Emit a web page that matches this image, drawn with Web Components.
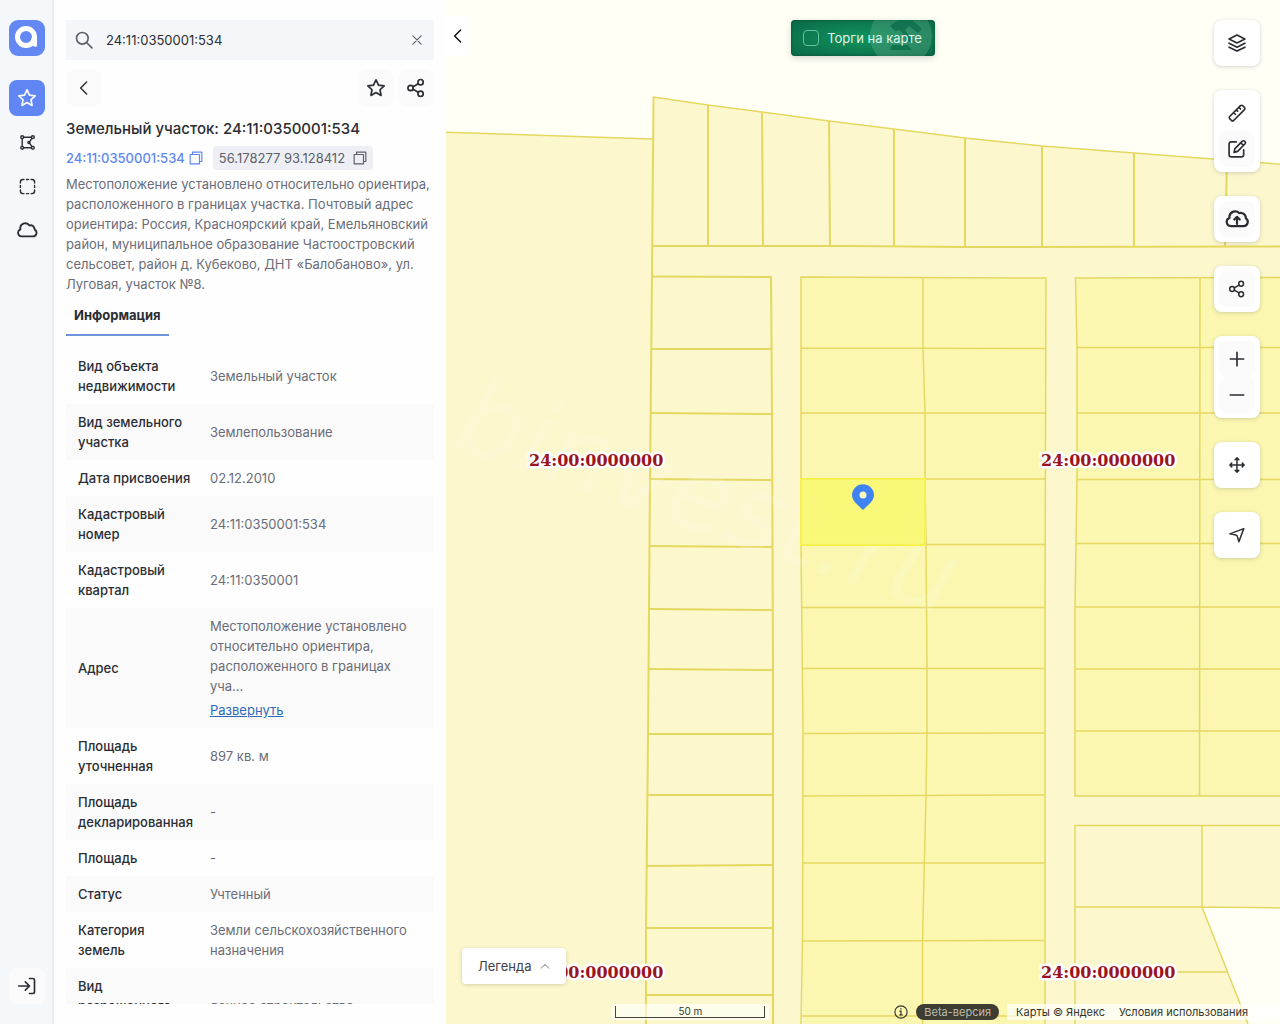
<!DOCTYPE html>
<html lang="ru">
<head>
<meta charset="utf-8">
<meta name="viewport" content="width=device-width, initial-scale=1">
<title>Земельный участок: 24:11:0350001:534</title>
<style>
:root {
  --font: Inter, "Open Sans", sans-serif;
  --ink: #2b2d33;
  --muted: #6a6d78;
  --accent: #5f86f2;
}
html, body { margin: 0; height: 100%; }
body { font: 13px/20px var(--font); color: var(--ink); overflow: hidden; }
</style>
</head>
<body>
<cad-app></cad-app>
<script>
const ICONS = {
  star: '<path d="M12 2.200l3 6.300 6.800.9-5 4.700 1.300 6.800-6.100-3.400-6.100 3.400 1.300-6.800-5-4.700 6.800-.9z"/>',
  polygon: '<circle cx="4.500" cy="4.500" r="2"/><circle cx="19.500" cy="4.500" r="2"/><circle cx="4.500" cy="19.500" r="2"/><circle cx="19.500" cy="19.500" r="2"/><circle cx="14" cy="12" r="1.500"/><path d="M4.500 6.500v11M6.500 4.500h11M6.500 19.500h11M18.300 6.200L15 10.800M15 13.200l3.300 4.600"/>',
  select: '<path d="M2 7V5.500Q2 2 5.500 2H7M17 2h1.500Q22 2 22 5.500V7M22 17v1.500Q22 22 18.500 22H17M7 22H5.500Q2 22 2 18.500V17M10.500 2h3M10.500 22h3M2 10.500v3M22 10.500v3"/>',
  cloud: '<path d="M6 19h12.500a4 4 0 0 0 2-7.400 6 6 0 0 0-2.300-4.200 3.500 3.500 0 0 0-3.500-.2A5.500 5.500 0 0 0 4.600 9.500l.2 1.800A4 4 0 0 0 6 19z"/>',
  login: '<path d="M2 12h13M10 7l5 5-5 5M15 3h4q2 0 2 2v14q0 2-2 2h-4"/>',
  search: '<circle cx="10" cy="10" r="7"/><path d="M15 15l6.500 6.500"/>',
  close: '<path d="M5 5l14 14M19 5L5 19"/>',
  back: '<path d="M15.500 4l-8 8 8 8"/>',
  share: '<circle cx="5.500" cy="12" r="3.200"/><circle cx="17.500" cy="5" r="3.200"/><circle cx="17.500" cy="19" r="3.200"/><path d="M8.400 10.500L14.700 6.800M8.400 13.500l6.300 3.700"/>',
  copy: '<path d="M2 6h16v16H2zM6 6V2h16v16h-4"/>',
  up: '<path d="M3 17l9-9 9 9"/>',
  layers: '<path d="M12 2.500l9.500 4.700L12 12 2.500 7.200zM2.500 12.200L12 17l9.500-4.800M2.500 17L12 21.700 21.500 17"/>',
  ruler: '<path d="M3.200 16.200L16.200 3.200q1.300-1 2.600 0l2.200 2.200q1 1.300 0 2.600L8 21q-1.300 1-2.600 0l-2.200-2.200q-1-1.300 0-2.600zM8 11.500l2 2M11.200 8.300l1.500 1.500M14.300 5.200l2 2"/>',
  edit: '<path d="M11 3.500H5.500Q2.500 3.500 2.500 6v13q0 2.500 3 2.500h11.500Q20 21.500 20 19v-6M8.500 16l1-4.500 9-9q1.500-1 3 .4 1.200 1.500.2 2.800l-9 9.100zM16.500 4.500l3 3"/>',
  upload: '<path d="M6 18.500h12a3.800 3.800 0 0 0 2.200-7 5 5 0 0 0-3-4.700 4 4 0 0 0-3-.2A5.400 5.400 0 0 0 5 9.500l.1 1.600A3.800 3.800 0 0 0 6 18.500zM12 16.500v-6M9.500 12.500L12 10l2.500 2.500"/>',
  plus: '<path d="M12 4v16M4 12h16"/>',
  minus: '<path d="M4 12h16"/>',
  move: '<path d="M12 2.500v19M2.500 12h19M9.500 5L12 2.500 14.500 5M9.500 19l2.500 2.500 2.500-2.500M5 9.500L2.500 12 5 14.500M19 9.500l2.500 2.500-2.500 2.500"/>',
  locate: '<path d="M21 3.500L2.500 10.500l8 1.500q2 .5 2.200 2.500L14.500 21z"/>',
  info: '<circle cx="12" cy="12" r="10.500"/><path d="M12 10v7M12 6v1M10 10.500h2M10 17h4"/>'
};

function define(name, html) {
  const template = document.createElement('template');
  template.innerHTML = html;
  customElements.define(name, class extends HTMLElement {
    constructor() {
      super();
      this.attachShadow({ mode: 'open' }).append(template.content.cloneNode(true));
    }
  });
}

/* Line icon: <ui-icon name="star" size="20" weight="2"> */
customElements.define('ui-icon', class extends HTMLElement {
  connectedCallback() {
    if (this.shadowRoot) return;
    const size = this.getAttribute('size') || 20;
    const weight = this.getAttribute('weight') || 2;
    this.attachShadow({ mode: 'open' }).innerHTML = `
      <style>:host{display:inline-flex} svg{display:block;fill:none;stroke:currentColor;stroke-linecap:round;stroke-linejoin:round}</style>
      <svg width="${size}" height="${size}" viewBox="0 0 24 24" stroke-width="${weight}" aria-hidden="true">${ICONS[this.getAttribute('name')]}</svg>`;
  }
});

/* Square button around an icon */
customElements.define('icon-button', class extends HTMLElement {
  connectedCallback() {
    if (this.shadowRoot) return;
    this.attachShadow({ mode: 'open' }).innerHTML = `
      <style>
        :host{display:block}
        button{display:flex;align-items:center;justify-content:center;width:36px;height:36px;padding:0;border:0;border-radius:8px;background:transparent;color:var(--ink);cursor:pointer}
        :host([tone=soft]) button{background:#fbfbfc}
        :host([tone=active]) button{background:var(--accent);color:#fff}
      </style>
      <button type="button" aria-label="${this.getAttribute('label')}"><slot></slot></button>`;
  }
});

define('side-rail', `
  <style>
    :host{display:flex;flex-direction:column;align-items:center;box-sizing:border-box;flex:none;width:54px;padding:20px 0;background:#f5f8fb;box-shadow:inset -2px 0 #e9eff3}
    .logo{display:block;height:36px;margin-bottom:24px}
    nav{display:flex;flex-direction:column;gap:8px}
    .end{margin-top:auto}
  </style>
  <a class="logo" href="#" aria-label="На главную">
    <svg width="36" height="36" viewBox="0 0 36 36"><rect width="36" height="36" rx="9" fill="#6488f3"/><circle cx="17" cy="17" r="8.500" fill="none" stroke="#fff" stroke-width="5"/><path d="M23 17h5v8.500q0 1.500-1.700 1.300-3-.3-5.300-2.800z" fill="#fff"/></svg>
  </a>
  <nav>
    <icon-button tone="active" label="Избранное"><ui-icon name="star" size="20"></ui-icon></icon-button>
    <icon-button label="Область"><ui-icon name="polygon" size="17" weight="2"></ui-icon></icon-button>
    <icon-button label="Выделение"><ui-icon name="select" size="17" weight="2"></ui-icon></icon-button>
    <icon-button label="Облако"><ui-icon name="cloud" size="22" weight="2"></ui-icon></icon-button>
  </nav>
  <icon-button class="end" tone="soft" label="Войти"><ui-icon name="login" size="20"></ui-icon></icon-button>`);

define('search-field', `
  <style>
    :host{display:flex;align-items:center;flex:none;height:40px;background:#f5f6fa;color:#5d606a}
    label{display:flex;padding:0 8px}
    input{flex:1;min-width:0;padding:0 0 0 4px;border:0;background:none;outline:0;font:13px/20px var(--font);color:var(--ink)}
    button{display:flex;padding:10px;border:0;background:none;color:inherit}
  </style>
  <label for="q" aria-label="Поиск"><ui-icon name="search" size="20"></ui-icon></label>
  <input id="q" type="text" value="24:11:0350001:534">
  <button type="button" aria-label="Очистить"><ui-icon name="close" size="14" weight="2"></ui-icon></button>`);

/* Attribute name and value of the selected parcel */
const ROWS = [
  ['Вид объекта недвижимости', 'Земельный участок'],
  ['Вид земельного участка', 'Землепользование'],
  ['Дата присвоения', '02.12.2010'],
  ['Кадастровый номер', '24:11:0350001:534'],
  ['Кадастровый квартал', '24:11:0350001'],
  ['Адрес', 'Местоположение установлено относительно ориентира, расположенного в границах<br>уча...<a href="#">Развернуть</a>'],
  ['Площадь уточненная', '897 кв. м'],
  ['Площадь декларированная', '-'],
  ['Площадь', '-'],
  ['Статус', 'Учтенный'],
  ['Категория<br>земель', 'Земли сельскохозяйственного назначения'],
  ['Вид<br>разрешенного<br>использования', 'дачное строительство']
];
define('info-table', `
  <style>
    :host{display:block}
    table{width:100%;border-collapse:collapse;table-layout:fixed}
    col{width:132px}
    col + col{width:auto}
    th,td{padding:8px 12px;text-align:left;vertical-align:middle}
    th{padding-right:0;font-weight:500}
    td{color:var(--muted)}
    tr:nth-child(even){background:#fafafb}
    a{display:block;padding-top:4px;color:#2f6ab8}
  </style>
  <table><colgroup><col><col></colgroup><tbody>
    ${ROWS.map(([k, v]) => `<tr><th scope="row">${k}</th><td>${v}</td></tr>`).join('')}
  </tbody></table>`);

define('object-panel', `
  <style>
    :host{display:flex;flex-direction:column;box-sizing:border-box;flex:none;width:392px;padding:20px 12px;background:#fefefe}
    .bar{display:flex;flex:none;gap:4px;margin:10px 0}
    .bar > :first-child{margin-right:auto}
    h1{margin:0 0 4px;font:500 15px/26px var(--font)}
    .ids{display:flex;align-items:center;gap:10px;flex:none;height:24px;margin-bottom:4px}
    .ids > *{display:flex;align-items:center;gap:4px}
    .ids a{font-weight:500;color:var(--accent);text-decoration:none}
    .ids button{height:24px;padding:0 6px;gap:8px;border:0;border-radius:4px;background:#eeeff4;font:13px/20px var(--font);color:#5d606a}
    p{margin:0 0 8px;color:var(--muted)}
    .tab{align-self:flex-start;flex:none;height:34px;margin-bottom:12px;padding:0 8px 6px;border:0;border-bottom:2px solid #6f93d8;background:none;font:700 13px/20px var(--font);color:var(--ink)}
    .scroll{flex:1;min-height:0;overflow:hidden}
  </style>
  <search-field></search-field>
  <div class="bar">
    <icon-button tone="soft" label="Назад"><ui-icon name="back" size="18" weight="2"></ui-icon></icon-button>
    <icon-button tone="soft" label="В избранное"><ui-icon name="star" size="20"></ui-icon></icon-button>
    <icon-button tone="soft" label="Поделиться"><ui-icon name="share" size="20"></ui-icon></icon-button>
  </div>
  <h1>Земельный участок: 24:11:0350001:534</h1>
  <div class="ids">
    <a href="#">24:11:0350001:534 <ui-icon name="copy" size="14" weight="2"></ui-icon></a>
    <button type="button">56.178277 93.128412 <ui-icon name="copy" size="14" weight="2"></ui-icon></button>
  </div>
  <p>Местоположение установлено относительно ориентира, расположенного в границах участка. Почтовый адрес ориентира: Россия, Красноярский край, Емельяновский район, муниципальное образование Частоостровский сельсовет, район д. Кубеково, ДНТ «Балобаново», ул. Луговая, участок №8.</p>
  <button class="tab" type="button">Информация</button>
  <div class="scroll"><info-table></info-table></div>`);

define('parcel-map', `
  <style>
    :host{display:block;overflow:hidden;background:#fffff6}
    svg{display:block;width:100%;height:100%}
    .land{fill:#fcf7cd}
    .plot{fill:#fbf7b0}
    .line{fill:none;stroke:#e4d860;stroke-width:2}
    .fine{stroke-width:1.500}
    .label{font:bold 16px "DejaVu Serif",serif;fill:#9b1420;stroke:#fff;stroke-width:5;stroke-linejoin:round;paint-order:stroke}
    .mark{font:italic 104px "DejaVu Sans",sans-serif;fill:#fff;fill-opacity:.14}
  </style>
  <svg viewBox="446 0 834 1024" preserveAspectRatio="xMidYMid slice">
    <path class="land" d="M440 132L653 139V97L708 105 762 112 829 121 894 129 965 138 1042 146 1134 153 1290 165V908H1202L1248 1024H440z"/>
    <path class="plot" d="M801 277L1046 278 1045 1024H803L801 277zM1076 278H1290V796H1075V607L1077 347z"/>
    <path class="line fine" d="M440 132L653 139M653 97L708 105 762 112 829 121 894 129 965 138 1042 146 1134 153 1290 165"/>
    <path class="line" d="M653.500 97L652 276 650 480 648 740 646 930V1024M653 246H850L965 247 1290 246.500"/>
    <path class="line" d="M708 105V246M762 112L763 246M829 121L830 246M894 129V246M965 138V246M1042 146V246M1134 153V246M1227 160L1225 246"/>
    <path class="line" d="M652 276.500L771 277 772 413 773 670V1024M651 349H771M650 413L772 414M650 479L772 480M650 546L772 547M649 609L772 610M648 669L773 670M648 734H773M647 795H773M647 866L773 865M647 928H773M646 995H773"/>
    <path class="line fine" d="M801 1024L802.500 940 803 730 801 545V277L1046 278 1045 608V1024M923 278V348L925 413V480L926 545 927 668V733L926 796 922.500 941V1024M801 348L1046 348.500M801 413H1046M801 479H1046M801 544.500H1045M802 607.500H1045M802 668.500H1045M803 733.500L1045 733M803 796L1045 795M803 863H1045M802 941L1045 940.500M802 1016H1045"/>
    <path class="line fine" d="M1290 277.500L1075.500 278 1077 347V480L1075 607V796H1290M1200 278L1199.500 796M1076 347.500H1290M1077 413H1290M1077 479.500H1290M1076 543.500H1290M1075 607H1290M1075 669H1290M1075 731H1290"/>
    <path class="line fine" d="M1075 1024V825.500H1290M1202 825V907M1075 907H1202L1290 908M1202 907L1248 1024M1075 972H1228"/>
    <text class="mark" transform="translate(450 446) rotate(19)">binvest.ru</text>
    <path d="M801 479H925V545H801z" fill="#f9f86c" fill-opacity=".8" stroke="#f5f250" stroke-width="2"/>
    <path d="M863 510c-4-4.500-11-8.500-11-14.800a11 11 0 0 1 22 0c0 6.300-7 10.300-11 14.800z" fill="#3f83f3"/><circle cx="863" cy="495" r="3.500" fill="#faf9c0"/>
    <text class="label" x="529" y="466">24:00:0000000</text>
    <text class="label" x="1041" y="466">24:00:0000000</text>
    <text class="label" x="529" y="978">24:00:0000000</text>
    <text class="label" x="1041" y="978">24:00:0000000</text>
  </svg>`);

define('tool-group', `
  <style>:host{display:flex;flex-direction:column;padding:5px;border-radius:8px;background:#fff;box-shadow:0 1px 4px rgba(40,50,70,.2)}</style>
  <slot></slot>`);

define('auction-toggle', `
  <style>
    :host{display:block}
    label{position:relative;display:flex;align-items:center;gap:8px;height:36px;padding:0 13px 0 12px;overflow:hidden;box-sizing:border-box;border-radius:4px;background:radial-gradient(ellipse at center,#11945f,#0b6847);box-shadow:inset 0 0 3px #064c32;color:#dff5ea}
    svg{position:absolute;right:0;top:0}
    input{appearance:none;position:relative;width:16px;height:16px;margin:0;border:1px solid #62c49a;border-radius:4px}
    span{position:relative}
  </style>
  <label>
    <svg width="68" height="36" viewBox="0 0 68 36" aria-hidden="true"><circle cx="34" cy="16" r="31" fill="#64b08c" fill-opacity=".35"/><path d="M23 6l8-6h14l10 9-4 4-9-7-4 4 8 12h-4l-9-12-5 1zM25 25h16l4 5H23z" fill="#0b6e4c" fill-opacity=".8"/></svg>
    <input type="checkbox"><span>Торги на карте</span>
  </label>`);

define('map-view', `
  <style>
    :host{display:block;position:relative;flex:1;min-width:0;overflow:hidden}
    parcel-map{height:100%}
    .fold{position:absolute;left:0;top:16px;display:flex;align-items:center;justify-content:center;width:23px;height:40px;padding:0;border:0;border-radius:0 4px 4px 0;background:#fff;color:#111}
    .top{position:absolute;top:20px;left:0;right:0;display:flex;justify-content:center}
    auction-toggle{box-shadow:0 2px 6px rgba(40,50,40,.2);border-radius:4px;white-space:nowrap}
    .tools{position:absolute;top:20px;right:20px;display:flex;flex-direction:column;gap:24px}
    .legend{position:absolute;left:16px;bottom:40px;display:flex;align-items:center;gap:8px;height:36px;padding:0 16px;border:0;border-radius:4px;background:#fff;box-shadow:0 1px 4px rgba(60,60,20,.2);font:13px/20px var(--font);color:#3f4149}
    .legend ui-icon{color:#aaa}
    footer{position:absolute;right:0;bottom:4px;display:flex;align-items:center;gap:8px;height:16px;font-size:11px;line-height:16px;color:#34352f}
    .scale{box-sizing:border-box;width:158px;height:16px;margin-right:117px;padding:2px 4px;background:rgba(255,255,255,.6)}
    .scale div{box-sizing:border-box;height:12px;border:1px solid #44453c;border-top:0;font-size:10px;line-height:10px;text-align:center}
    .beta{padding:0 8px;border-radius:8px;background:#3c3c32;color:#bdbcae}
    .credits{display:flex;gap:14px;padding:0 32px 0 9px;background:rgba(255,255,255,.7)}
    .credits a{color:inherit;text-decoration:none}
  </style>
  <parcel-map></parcel-map>
  <button class="fold" type="button" aria-label="Свернуть панель"><ui-icon name="back" size="18" weight="2"></ui-icon></button>
  <div class="top"><auction-toggle></auction-toggle></div>
  <div class="tools">
    <tool-group><icon-button label="Слои"><ui-icon name="layers" size="20"></ui-icon></icon-button></tool-group>
    <tool-group>
      <icon-button label="Линейка"><ui-icon name="ruler" size="20"></ui-icon></icon-button>
      <icon-button tone="soft" label="Рисовать"><ui-icon name="edit" size="20"></ui-icon></icon-button>
    </tool-group>
    <tool-group><icon-button tone="soft" label="Загрузить"><ui-icon name="upload" size="26" weight="2"></ui-icon></icon-button></tool-group>
    <tool-group><icon-button tone="soft" label="Поделиться"><ui-icon name="share" size="18"></ui-icon></icon-button></tool-group>
    <tool-group>
      <icon-button tone="soft" label="Приблизить"><ui-icon name="plus" size="20"></ui-icon></icon-button>
      <icon-button tone="soft" label="Отдалить"><ui-icon name="minus" size="20"></ui-icon></icon-button>
    </tool-group>
    <tool-group><icon-button label="Переместить"><ui-icon name="move" size="18"></ui-icon></icon-button></tool-group>
    <tool-group><icon-button label="Моё местоположение"><ui-icon name="locate" size="18"></ui-icon></icon-button></tool-group>
  </div>
  <button class="legend" type="button">Легенда <ui-icon name="up" size="10" weight="3"></ui-icon></button>
  <footer>
    <div class="scale"><div>50 m</div></div>
    <ui-icon name="info" size="14" weight="2"></ui-icon>
    <span class="beta">Beta-версия</span>
    <span class="credits"><a href="#">Карты © Яндекс</a><a href="#">Условия использования</a></span>
  </footer>`);

define('cad-app', `
  <style>:host{display:flex;height:100vh}</style>
  <side-rail></side-rail>
  <object-panel></object-panel>
  <map-view></map-view>`);
</script>
</body>
</html>
